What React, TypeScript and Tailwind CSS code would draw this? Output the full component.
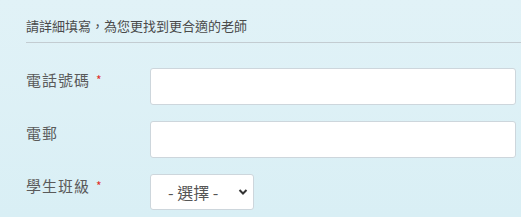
export default function App() {
  const rows = [
    { label: '電話號碼', required: true, type: 'input' },
    { label: '電郵', required: false, type: 'input' },
    { label: '學生班級', required: true, type: 'select' },
  ];

  return (
    <div
      className="w-[521px] h-[217px] overflow-hidden bg-gradient-to-b from-[#e1f2f7] to-[#d9eff5] pl-[26px] pt-[18px]"
      style={{ fontFamily: '"Noto Sans CJK TC", "Noto Sans", sans-serif' }}
    >
      <p className="text-[13px] leading-[16px] text-[#4a4a4a] pb-[8px] border-b border-[#c3ccd1]">
        請詳細填寫，為您更找到更合適的老師
      </p>

      <div className="flex flex-col gap-[16px] pt-[25px] pr-[5px]">
        {rows.map((r) => (
          <div key={r.label} className="flex items-start">
            <label className="w-[124px] shrink-0 pt-[2px] text-[15px] leading-[20px] text-[#5a5a5a] tracking-[1px]">
              {r.label}
              {r.required && <span className="ml-[6px] text-[12px] align-top text-[#e0302a]">*</span>}
            </label>
            {r.type === 'input' ? (
              <input
                className="flex-1 h-[37px] bg-white border border-[#cdd6dc] rounded-[3px] outline-none px-2"
                type="text"
              />
            ) : (
              <div className="relative w-[104px] h-[36px]">
                <select className="appearance-none w-full h-full bg-white border border-[#cdd6dc] rounded-[3px] pl-[17px] text-[16px] text-[#555] outline-none">
                  <option>- 選擇 -</option>
                </select>
                <svg
                  className="absolute right-[6px] top-[14px] pointer-events-none"
                  width="10"
                  height="8"
                  viewBox="0 0 10 8"
                >
                  <path d="M1.5 2 L5 5.5 L8.5 2" fill="none" stroke="#333" strokeWidth="2" />
                </svg>
              </div>
            )}
          </div>
        ))}
      </div>
    </div>
  );
}
